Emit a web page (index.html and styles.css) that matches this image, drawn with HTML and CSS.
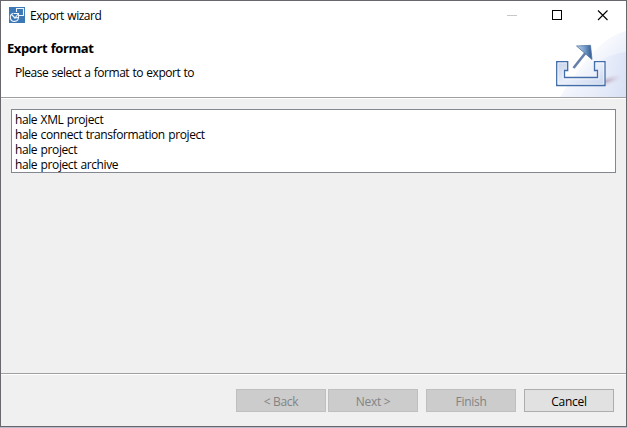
FILE: index.html
```html
<!DOCTYPE html>
<html lang="en">
<head>
<meta charset="utf-8">
<title>Export wizard</title>
<link rel="stylesheet" href="styles.css">
</head>
<body>
<main class="window">
  <header class="titlebar">
    <svg class="app-icon" width="16" height="16" viewBox="0 0 16 16">
      <rect width="16" height="16" fill="#3b78b5"/>
      <g fill="none" stroke="#edf4fb" stroke-width="1.1">
        <path d="M7.500 5V1.500H14.500V8.500H10"/>
        <path d="M5 6.500H9.500V11"/>
        <path d="M4.500 6.300A4.100 4.100 0 1 0 9.500 10.500L6 11 9.500 6.500M2.500 7.500L6 11"/>
      </g>
    </svg>
    <span class="title">Export wizard</span>
    <svg class="controls" width="138" height="28" viewBox="0 0 138 28" fill="none" shape-rendering="crispEdges">
      <path d="M19 14.500h10" stroke="#c8c8c8"/>
      <rect x="64.500" y="9.500" width="9" height="9" stroke="#000"/>
      <path d="M110 9.500l9.500 9.500M119.500 9.500l-9.500 9.500" stroke="#000" shape-rendering="auto" stroke-width="1.100"/>
    </svg>
  </header>
  <section class="banner">
    <div class="heading">
      <h1>Export format</h1>
      <p>Please select a format to export to</p>
    </div>
    <svg class="export-art" width="75" height="67" viewBox="551 30 75 67">
      <defs>
        <linearGradient id="sky" x1="0" y1="0" x2="1" y2="1"><stop offset=".3" stop-color="#fff"/><stop offset=".6" stop-color="#edf1fb"/><stop offset="1" stop-color="#dbe3f6"/></linearGradient>
        <linearGradient id="wave" x1="0" y1="0" x2="1" y2="0"><stop offset="0" stop-color="#fff" stop-opacity="0"/><stop offset="1" stop-color="#d5def4"/></linearGradient>
        <linearGradient id="head" x1="0" y1="0" x2="1" y2="0"><stop offset="0" stop-color="#c2d8ec"/><stop offset=".5" stop-color="#7ba0cb"/><stop offset="1" stop-color="#2c5792"/></linearGradient>
        <linearGradient id="tray" x1="0" y1="0" x2="1" y2="1"><stop offset="0" stop-color="#c7d5ea"/><stop offset=".5" stop-color="#e9eefa"/><stop offset="1" stop-color="#c8d5ec"/></linearGradient>
        <radialGradient id="shade"><stop offset="0" stop-color="#b7a3b9" stop-opacity=".8"/><stop offset="1" stop-color="#d8cfe0" stop-opacity="0"/></radialGradient>
      </defs>
      <path d="M626 31C603 37 585 58 560 97H626Z" fill="url(#sky)"/>
      <path d="M626 52C599 56 577 72 559 97H626Z" fill="url(#wave)" opacity=".6"/>
      <ellipse cx="607" cy="81" rx="16" ry="5" transform="rotate(-18 607 81)" fill="url(#shade)"/>
      <path d="M556.700 61.700H567.700V70.500H564.500V77.500H597.500V70.500H594.500V61.700H605V85.500H556.700Z" fill="url(#tray)" stroke="#426da8" stroke-width="1.300"/>
      <path d="M566.500 63H558V84.200H603.700V63H596M563 70V79H599V70" fill="none" stroke="#fff" stroke-opacity=".5"/>
      <path d="M573.500 68L587 51" stroke="#6680ab" stroke-width="2.600"/>
      <path d="M576.500 46L590.500 45.300 592 59.500Z" fill="url(#head)" stroke="#53749f" stroke-width=".8"/>
    </svg>
  </section>
  <section class="content">
    <ul class="formats">
      <li>hale XML project</li>
      <li>hale connect transformation project</li>
      <li>hale project</li>
      <li>hale project archive</li>
    </ul>
  </section>
  <footer class="actions">
    <button disabled>&lt; Back</button>
    <button disabled>Next &gt;</button>
    <button class="finish" disabled>Finish</button>
    <button class="cancel">Cancel</button>
  </footer>
</main>
</body>
</html>
```
FILE: styles.css
```css
* { box-sizing: border-box; }
body { margin: 0; background: #b9b9cc; font: 12px/15px "Open Sans", "Noto Sans", sans-serif; letter-spacing: -0.4px; word-spacing: 0.7px; color: #000; overflow: hidden; }
.window { width: 627px; height: 427px; border: 1px solid #69676b; background: #f0f0f0; display: flex; flex-direction: column; }
.titlebar { height: 29px; flex: none; background: #fff; display: flex; align-items: flex-start; padding-left: 8px; }
.app-icon { margin-top: 6px; }
.title { margin: 7px 0 0 5px; letter-spacing: -0.46px; }
.controls { margin-left: auto; }
.banner { height: 68px; flex: none; background: #fff; border-bottom: 1px solid #a0a0a0; display: flex; justify-content: space-between; }
.heading { padding: 10px 0 0 6px; }
h1 { margin: 0; font-size: 13px; line-height: 17px; font-weight: 700; letter-spacing: -0.42px; }
p { margin: 8px 0 0 8px; letter-spacing: -0.48px; }
.content { flex: 1; border-top: 1px solid #fff; padding: 10px 10px 0; }
.formats { margin: 0; height: 64px; padding: 2px 3px 0; list-style: none; border: 1px solid #828790; background: #fff; }
.formats li { height: 15px; }
.actions { height: 53px; flex: none; border-top: 1px solid #a0a0a0; box-shadow: inset 0 1px #fff; display: flex; justify-content: flex-end; padding: 15px 12px 0; gap: 2px; }
button { width: 90px; height: 23px; padding: 1px 0 0; font: inherit; letter-spacing: -0.3px; border: 1px solid #bfbfbf; background: #ccc; color: #838383; }
.finish { margin-left: 6px; }
.cancel { margin-left: 6px; border-color: #adadad; background: #e1e1e1; color: #000; }
```
